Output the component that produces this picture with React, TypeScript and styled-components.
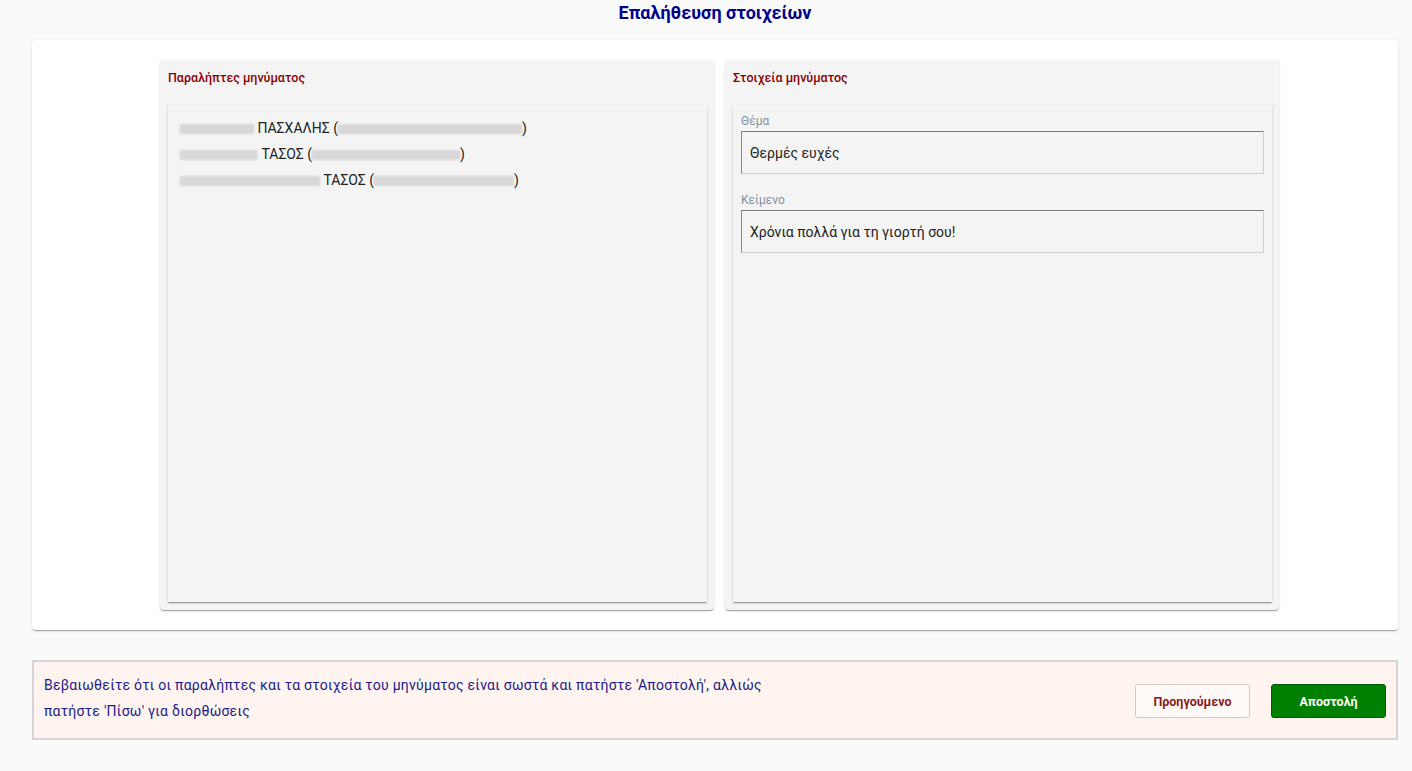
import styled, { createGlobalStyle } from "styled-components";

const GlobalStyle = createGlobalStyle`
  html, body {
    margin: 0;
    padding: 0;
    background: #fafafa;
    font-family: Roboto, "Noto Sans", "Liberation Sans", sans-serif;
  }
`;

const Page = styled.div`
  padding: 0 14px 0 32px;
  display: flex;
  flex-direction: column;
`;

const Title = styled.h1`
  margin: 0;
  height: 40px;
  line-height: 26px;
  text-align: center;
  font-size: 18px;
  font-weight: 700;
  color: #00008b;
`;

const MainCard = styled.div`
  background: #fff;
  border-radius: 4px;
  box-shadow: 0 2px 1px -1px rgba(0, 0, 0, 0.2), 0 1px 1px 0 rgba(0, 0, 0, 0.14),
    0 1px 3px 0 rgba(0, 0, 0, 0.12);
  padding: 20px 0 20px 128px;
  display: flex;
  gap: 11px;
`;

const Panel = styled.section`
  width: 554px;
  height: 550px;
  box-sizing: border-box;
  background: #f4f4f4;
  border-radius: 4px;
  box-shadow: 0 2px 1px -1px rgba(0, 0, 0, 0.2), 0 1px 1px 0 rgba(0, 0, 0, 0.14),
    0 1px 3px 0 rgba(0, 0, 0, 0.12);
  padding: 0 7px 8px 8px;
  display: flex;
  flex-direction: column;
`;

const PanelTitle = styled.h2`
  margin: 0;
  height: 45px;
  line-height: 36px;
  font-size: 12.5px;
  font-weight: 500;
  color: #8b0000;
`;

const PanelBody = styled.div`
  flex: 1;
  background: #f4f4f4;
  box-shadow: 0 2px 1px -1px rgba(0, 0, 0, 0.2), 0 1px 1px 0 rgba(0, 0, 0, 0.14),
    0 1px 3px 0 rgba(0, 0, 0, 0.12);
  padding: 10px 12px;
`;

const Recipient = styled.div`
  font-size: 14px;
  line-height: 26px;
  color: #222;
  white-space: nowrap;
`;

const Hidden = styled.span<{ $w: number }>`
  display: inline-block;
  width: ${(p) => p.$w}px;
  height: 10px;
  vertical-align: -1px;
  background: repeating-linear-gradient(
    90deg,
    #b4b4b4 0 1px,
    #e2e2e2 1px 3px
  );
  filter: blur(1px);
  opacity: 0.85;
`;

const FieldsBody = styled(PanelBody)`
  padding: 8px 8px;
  display: flex;
  flex-direction: column;
`;

const Label = styled.label`
  font-size: 12px;
  line-height: 16px;
  color: #8391a1;
  margin-bottom: 2px;
`;

const Field = styled.div`
  height: 43px;
  box-sizing: border-box;
  border: 1px solid #cfcfcf;
  border-top-color: #7a7a7a;
  border-left-color: #8a8a8a;
  padding: 0 8px;
  display: flex;
  align-items: center;
  font-size: 14px;
  color: #222;
  margin-bottom: 18px;
`;

const Notice = styled.div`
  margin-top: 30px;
  height: 80px;
  box-sizing: border-box;
  border: 2px solid #d4d4d4;
  background: #fff4f0;
  padding: 10px 10px 0 10px;
  display: flex;
  align-items: flex-start;
  justify-content: space-between;
`;

const NoticeText = styled.p`
  margin: 0;
  width: 760px;
  font-size: 14px;
  letter-spacing: 0.26px;
  line-height: 26px;
  color: #1a1a8a;
`;

const Actions = styled.div`
  display: flex;
  gap: 21px;
  padding-top: 12px;
`;

const Button = styled.button<{ $primary?: boolean }>`
  width: 115px;
  height: 34px;
  border-radius: 3px;
  font-family: Roboto, "Noto Sans", "Liberation Sans", sans-serif;
  font-size: 12.5px;
  font-weight: 700;
  cursor: pointer;
  border: 1px solid ${(p) => (p.$primary ? "#005c00" : "#d2c8c6")};
  background: ${(p) => (p.$primary ? "#008000" : "#fffaf8")};
  color: ${(p) => (p.$primary ? "#fff" : "#8b1a1a")};
`;

const recipients = [
  { pre: 74, name: "ΠΑΣΧΑΛΗΣ", mail: 184 },
  { pre: 78, name: "ΤΑΣΟΣ", mail: 148 },
  { pre: 140, name: "ΤΑΣΟΣ", mail: 140 },
];

export default function App() {
  return (
    <>
      <GlobalStyle />
      <Page>
        <Title>Επαλήθευση στοιχείων</Title>
        <MainCard>
          <Panel>
            <PanelTitle>Παραλήπτες μηνύματος</PanelTitle>
            <PanelBody>
              {recipients.map((r, i) => (
                <Recipient key={i}>
                  <Hidden $w={r.pre} /> {r.name} (<Hidden $w={r.mail} />)
                </Recipient>
              ))}
            </PanelBody>
          </Panel>
          <Panel>
            <PanelTitle>Στοιχεία μηνύματος</PanelTitle>
            <FieldsBody>
              <Label>Θέμα</Label>
              <Field>Θερμές ευχές</Field>
              <Label>Κείμενο</Label>
              <Field>Χρόνια πολλά για τη γιορτή σου!</Field>
            </FieldsBody>
          </Panel>
        </MainCard>
        <Notice>
          <NoticeText>
            Βεβαιωθείτε ότι οι παραλήπτες και τα στοιχεία του μηνύματος είναι
            σωστά και πατήστε 'Αποστολή', αλλιώς πατήστε 'Πίσω' για διορθώσεις
          </NoticeText>
          <Actions>
            <Button>Προηγούμενο</Button>
            <Button $primary>Αποστολή</Button>
          </Actions>
        </Notice>
      </Page>
    </>
  );
}
